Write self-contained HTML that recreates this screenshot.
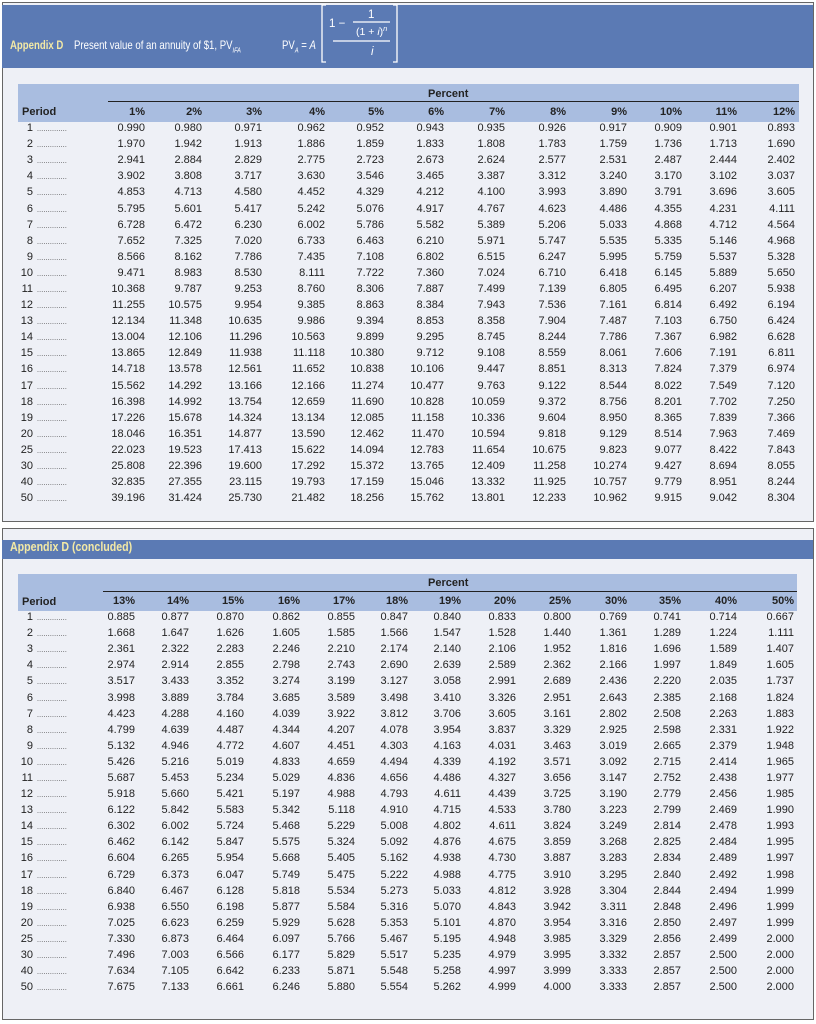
<!DOCTYPE html>
<html><head><meta charset="utf-8"><style>
body{margin:0;width:816px;height:1024px;background:#fff;position:relative;overflow:hidden;font-family:"Liberation Sans",sans-serif;color:#222}
.panel{position:absolute;left:2px;width:810px;background:#eef0f6;border:1px solid #666}
.hb{position:absolute;left:2px;width:811px;background:#5b7ab4}
.band{position:absolute;background:#a9bde0}
.abs{position:absolute}
table{position:absolute;left:0;border-collapse:collapse;table-layout:fixed;font-size:11px}
tr{height:16.1px}
td{height:16.1px;padding:0;text-align:right;white-space:nowrap;line-height:12px;overflow:hidden}
td.p{text-align:left}
td.p b{display:inline-block;width:16px;text-align:right;margin-left:17px;font-weight:normal;line-height:12px}
td.p i{font-style:normal;font-size:7px;letter-spacing:0.2px;margin-left:4px;color:#333;line-height:7px}
th{font-size:11px;font-weight:bold;text-align:right;padding:0;line-height:12px}
.t{color:#fff;font-size:12.5px;transform:scaleX(.85);transform-origin:left center;white-space:nowrap}
.t1{font-size:12px;transform:scaleX(.8)}
.y{color:#f3e9a6;font-weight:bold}
</style></head><body>

<div class="panel" style="top:2px;height:518px"></div>
<div class="hb" style="top:5px;height:63px"></div>
<div class="abs t t1" style="left:10px;top:38px"><span class="y">Appendix D</span>&nbsp;&nbsp;&nbsp; Present value of an annuity of $1, PV<sub style="font-size:7px;font-style:italic">IFA</sub></div>
<div class="abs t t1" style="left:282px;top:38px">PV<sub style="font-size:7px;font-style:italic">A</sub> = <i>A</i></div>
<svg class="abs" style="left:318px;top:4px" width="85" height="62"><g stroke="#fff" fill="none" stroke-width="1.3"><path d="M8 1H4V58H8M75 1H79V58H75"/><path d="M35 18H72M15 37H72"/></g>
<text x="50" y="14" fill="#fff" font-size="11.5" font-family="Liberation Sans">1</text>
<text x="11" y="23" fill="#fff" font-size="11.5" font-family="Liberation Sans">1 −</text>
<text x="38" y="31" fill="#fff" font-size="10.5" font-family="Liberation Sans">(1 + <tspan font-style="italic">i</tspan>)<tspan dy="-4" font-size="7.5" font-style="italic">n</tspan></text>
<text x="53" y="51" fill="#fff" font-size="11.5" font-style="italic" font-family="Liberation Sans">i</text></svg>

<div class="band" style="left:18px;top:84px;width:781px;height:38px"></div>
<div class="abs" style="left:428px;top:88px;font-size:11px;font-weight:bold">Percent</div>
<div class="abs" style="left:108px;top:101px;width:691px;height:1px;background:#222"></div>
<div class="abs" style="left:22px;top:106px;font-size:11px;font-weight:bold">Period</div>

<table style="top:104px;width:795px">
<colgroup><col style="width:100px"><col style="width:45px"><col style="width:57px"><col style="width:60px"><col style="width:63px"><col style="width:59px"><col style="width:60px"><col style="width:61px"><col style="width:61px"><col style="width:61px"><col style="width:55px"><col style="width:55px"><col style="width:58px"></colgroup>
<tr style="height:16px"><th></th><th>1%</th><th>2%</th><th>3%</th><th>4%</th><th>5%</th><th>6%</th><th>7%</th><th>8%</th><th>9%</th><th>10%</th><th>11%</th><th>12%</th></tr>
<tr><td class="p"><b>1</b><i>..............</i></td><td>0.990</td><td>0.980</td><td>0.971</td><td>0.962</td><td>0.952</td><td>0.943</td><td>0.935</td><td>0.926</td><td>0.917</td><td>0.909</td><td>0.901</td><td>0.893</td></tr>
<tr><td class="p"><b>2</b><i>..............</i></td><td>1.970</td><td>1.942</td><td>1.913</td><td>1.886</td><td>1.859</td><td>1.833</td><td>1.808</td><td>1.783</td><td>1.759</td><td>1.736</td><td>1.713</td><td>1.690</td></tr>
<tr><td class="p"><b>3</b><i>..............</i></td><td>2.941</td><td>2.884</td><td>2.829</td><td>2.775</td><td>2.723</td><td>2.673</td><td>2.624</td><td>2.577</td><td>2.531</td><td>2.487</td><td>2.444</td><td>2.402</td></tr>
<tr><td class="p"><b>4</b><i>..............</i></td><td>3.902</td><td>3.808</td><td>3.717</td><td>3.630</td><td>3.546</td><td>3.465</td><td>3.387</td><td>3.312</td><td>3.240</td><td>3.170</td><td>3.102</td><td>3.037</td></tr>
<tr><td class="p"><b>5</b><i>..............</i></td><td>4.853</td><td>4.713</td><td>4.580</td><td>4.452</td><td>4.329</td><td>4.212</td><td>4.100</td><td>3.993</td><td>3.890</td><td>3.791</td><td>3.696</td><td>3.605</td></tr>
<tr><td class="p"><b>6</b><i>..............</i></td><td>5.795</td><td>5.601</td><td>5.417</td><td>5.242</td><td>5.076</td><td>4.917</td><td>4.767</td><td>4.623</td><td>4.486</td><td>4.355</td><td>4.231</td><td>4.111</td></tr>
<tr><td class="p"><b>7</b><i>..............</i></td><td>6.728</td><td>6.472</td><td>6.230</td><td>6.002</td><td>5.786</td><td>5.582</td><td>5.389</td><td>5.206</td><td>5.033</td><td>4.868</td><td>4.712</td><td>4.564</td></tr>
<tr><td class="p"><b>8</b><i>..............</i></td><td>7.652</td><td>7.325</td><td>7.020</td><td>6.733</td><td>6.463</td><td>6.210</td><td>5.971</td><td>5.747</td><td>5.535</td><td>5.335</td><td>5.146</td><td>4.968</td></tr>
<tr><td class="p"><b>9</b><i>..............</i></td><td>8.566</td><td>8.162</td><td>7.786</td><td>7.435</td><td>7.108</td><td>6.802</td><td>6.515</td><td>6.247</td><td>5.995</td><td>5.759</td><td>5.537</td><td>5.328</td></tr>
<tr><td class="p"><b>10</b><i>..............</i></td><td>9.471</td><td>8.983</td><td>8.530</td><td>8.111</td><td>7.722</td><td>7.360</td><td>7.024</td><td>6.710</td><td>6.418</td><td>6.145</td><td>5.889</td><td>5.650</td></tr>
<tr><td class="p"><b>11</b><i>..............</i></td><td>10.368</td><td>9.787</td><td>9.253</td><td>8.760</td><td>8.306</td><td>7.887</td><td>7.499</td><td>7.139</td><td>6.805</td><td>6.495</td><td>6.207</td><td>5.938</td></tr>
<tr><td class="p"><b>12</b><i>..............</i></td><td>11.255</td><td>10.575</td><td>9.954</td><td>9.385</td><td>8.863</td><td>8.384</td><td>7.943</td><td>7.536</td><td>7.161</td><td>6.814</td><td>6.492</td><td>6.194</td></tr>
<tr><td class="p"><b>13</b><i>..............</i></td><td>12.134</td><td>11.348</td><td>10.635</td><td>9.986</td><td>9.394</td><td>8.853</td><td>8.358</td><td>7.904</td><td>7.487</td><td>7.103</td><td>6.750</td><td>6.424</td></tr>
<tr><td class="p"><b>14</b><i>..............</i></td><td>13.004</td><td>12.106</td><td>11.296</td><td>10.563</td><td>9.899</td><td>9.295</td><td>8.745</td><td>8.244</td><td>7.786</td><td>7.367</td><td>6.982</td><td>6.628</td></tr>
<tr><td class="p"><b>15</b><i>..............</i></td><td>13.865</td><td>12.849</td><td>11.938</td><td>11.118</td><td>10.380</td><td>9.712</td><td>9.108</td><td>8.559</td><td>8.061</td><td>7.606</td><td>7.191</td><td>6.811</td></tr>
<tr><td class="p"><b>16</b><i>..............</i></td><td>14.718</td><td>13.578</td><td>12.561</td><td>11.652</td><td>10.838</td><td>10.106</td><td>9.447</td><td>8.851</td><td>8.313</td><td>7.824</td><td>7.379</td><td>6.974</td></tr>
<tr><td class="p"><b>17</b><i>..............</i></td><td>15.562</td><td>14.292</td><td>13.166</td><td>12.166</td><td>11.274</td><td>10.477</td><td>9.763</td><td>9.122</td><td>8.544</td><td>8.022</td><td>7.549</td><td>7.120</td></tr>
<tr><td class="p"><b>18</b><i>..............</i></td><td>16.398</td><td>14.992</td><td>13.754</td><td>12.659</td><td>11.690</td><td>10.828</td><td>10.059</td><td>9.372</td><td>8.756</td><td>8.201</td><td>7.702</td><td>7.250</td></tr>
<tr><td class="p"><b>19</b><i>..............</i></td><td>17.226</td><td>15.678</td><td>14.324</td><td>13.134</td><td>12.085</td><td>11.158</td><td>10.336</td><td>9.604</td><td>8.950</td><td>8.365</td><td>7.839</td><td>7.366</td></tr>
<tr><td class="p"><b>20</b><i>..............</i></td><td>18.046</td><td>16.351</td><td>14.877</td><td>13.590</td><td>12.462</td><td>11.470</td><td>10.594</td><td>9.818</td><td>9.129</td><td>8.514</td><td>7.963</td><td>7.469</td></tr>
<tr><td class="p"><b>25</b><i>..............</i></td><td>22.023</td><td>19.523</td><td>17.413</td><td>15.622</td><td>14.094</td><td>12.783</td><td>11.654</td><td>10.675</td><td>9.823</td><td>9.077</td><td>8.422</td><td>7.843</td></tr>
<tr><td class="p"><b>30</b><i>..............</i></td><td>25.808</td><td>22.396</td><td>19.600</td><td>17.292</td><td>15.372</td><td>13.765</td><td>12.409</td><td>11.258</td><td>10.274</td><td>9.427</td><td>8.694</td><td>8.055</td></tr>
<tr><td class="p"><b>40</b><i>..............</i></td><td>32.835</td><td>27.355</td><td>23.115</td><td>19.793</td><td>17.159</td><td>15.046</td><td>13.332</td><td>11.925</td><td>10.757</td><td>9.779</td><td>8.951</td><td>8.244</td></tr>
<tr><td class="p"><b>50</b><i>..............</i></td><td>39.196</td><td>31.424</td><td>25.730</td><td>21.482</td><td>18.256</td><td>15.762</td><td>13.801</td><td>12.233</td><td>10.962</td><td>9.915</td><td>9.042</td><td>8.304</td></tr>
</table>

<div class="panel" style="top:528px;height:490px"></div>
<div class="hb" style="top:540px;height:19px"></div>
<div class="abs t" style="left:10px;top:540px"><span class="y">Appendix D (concluded)</span></div>

<div class="band" style="left:18px;top:574px;width:779px;height:37px"></div>
<div class="abs" style="left:428px;top:577px;font-size:11px;font-weight:bold">Percent</div>
<div class="abs" style="left:103px;top:591px;width:694px;height:1px;background:#222"></div>
<div class="abs" style="left:22px;top:596px;font-size:11px;font-weight:bold">Period</div>

<table style="top:593px;width:794px">
<colgroup><col style="width:95px"><col style="width:40px"><col style="width:54px"><col style="width:55px"><col style="width:56px"><col style="width:55px"><col style="width:53px"><col style="width:53px"><col style="width:55px"><col style="width:55px"><col style="width:56px"><col style="width:54px"><col style="width:56px"><col style="width:57px"></colgroup>
<tr style="height:16px"><th></th><th>13%</th><th>14%</th><th>15%</th><th>16%</th><th>17%</th><th>18%</th><th>19%</th><th>20%</th><th>25%</th><th>30%</th><th>35%</th><th>40%</th><th>50%</th></tr>
<tr><td class="p"><b>1</b><i>..............</i></td><td>0.885</td><td>0.877</td><td>0.870</td><td>0.862</td><td>0.855</td><td>0.847</td><td>0.840</td><td>0.833</td><td>0.800</td><td>0.769</td><td>0.741</td><td>0.714</td><td>0.667</td></tr>
<tr><td class="p"><b>2</b><i>..............</i></td><td>1.668</td><td>1.647</td><td>1.626</td><td>1.605</td><td>1.585</td><td>1.566</td><td>1.547</td><td>1.528</td><td>1.440</td><td>1.361</td><td>1.289</td><td>1.224</td><td>1.111</td></tr>
<tr><td class="p"><b>3</b><i>..............</i></td><td>2.361</td><td>2.322</td><td>2.283</td><td>2.246</td><td>2.210</td><td>2.174</td><td>2.140</td><td>2.106</td><td>1.952</td><td>1.816</td><td>1.696</td><td>1.589</td><td>1.407</td></tr>
<tr><td class="p"><b>4</b><i>..............</i></td><td>2.974</td><td>2.914</td><td>2.855</td><td>2.798</td><td>2.743</td><td>2.690</td><td>2.639</td><td>2.589</td><td>2.362</td><td>2.166</td><td>1.997</td><td>1.849</td><td>1.605</td></tr>
<tr><td class="p"><b>5</b><i>..............</i></td><td>3.517</td><td>3.433</td><td>3.352</td><td>3.274</td><td>3.199</td><td>3.127</td><td>3.058</td><td>2.991</td><td>2.689</td><td>2.436</td><td>2.220</td><td>2.035</td><td>1.737</td></tr>
<tr><td class="p"><b>6</b><i>..............</i></td><td>3.998</td><td>3.889</td><td>3.784</td><td>3.685</td><td>3.589</td><td>3.498</td><td>3.410</td><td>3.326</td><td>2.951</td><td>2.643</td><td>2.385</td><td>2.168</td><td>1.824</td></tr>
<tr><td class="p"><b>7</b><i>..............</i></td><td>4.423</td><td>4.288</td><td>4.160</td><td>4.039</td><td>3.922</td><td>3.812</td><td>3.706</td><td>3.605</td><td>3.161</td><td>2.802</td><td>2.508</td><td>2.263</td><td>1.883</td></tr>
<tr><td class="p"><b>8</b><i>..............</i></td><td>4.799</td><td>4.639</td><td>4.487</td><td>4.344</td><td>4.207</td><td>4.078</td><td>3.954</td><td>3.837</td><td>3.329</td><td>2.925</td><td>2.598</td><td>2.331</td><td>1.922</td></tr>
<tr><td class="p"><b>9</b><i>..............</i></td><td>5.132</td><td>4.946</td><td>4.772</td><td>4.607</td><td>4.451</td><td>4.303</td><td>4.163</td><td>4.031</td><td>3.463</td><td>3.019</td><td>2.665</td><td>2.379</td><td>1.948</td></tr>
<tr><td class="p"><b>10</b><i>..............</i></td><td>5.426</td><td>5.216</td><td>5.019</td><td>4.833</td><td>4.659</td><td>4.494</td><td>4.339</td><td>4.192</td><td>3.571</td><td>3.092</td><td>2.715</td><td>2.414</td><td>1.965</td></tr>
<tr><td class="p"><b>11</b><i>..............</i></td><td>5.687</td><td>5.453</td><td>5.234</td><td>5.029</td><td>4.836</td><td>4.656</td><td>4.486</td><td>4.327</td><td>3.656</td><td>3.147</td><td>2.752</td><td>2.438</td><td>1.977</td></tr>
<tr><td class="p"><b>12</b><i>..............</i></td><td>5.918</td><td>5.660</td><td>5.421</td><td>5.197</td><td>4.988</td><td>4.793</td><td>4.611</td><td>4.439</td><td>3.725</td><td>3.190</td><td>2.779</td><td>2.456</td><td>1.985</td></tr>
<tr><td class="p"><b>13</b><i>..............</i></td><td>6.122</td><td>5.842</td><td>5.583</td><td>5.342</td><td>5.118</td><td>4.910</td><td>4.715</td><td>4.533</td><td>3.780</td><td>3.223</td><td>2.799</td><td>2.469</td><td>1.990</td></tr>
<tr><td class="p"><b>14</b><i>..............</i></td><td>6.302</td><td>6.002</td><td>5.724</td><td>5.468</td><td>5.229</td><td>5.008</td><td>4.802</td><td>4.611</td><td>3.824</td><td>3.249</td><td>2.814</td><td>2.478</td><td>1.993</td></tr>
<tr><td class="p"><b>15</b><i>..............</i></td><td>6.462</td><td>6.142</td><td>5.847</td><td>5.575</td><td>5.324</td><td>5.092</td><td>4.876</td><td>4.675</td><td>3.859</td><td>3.268</td><td>2.825</td><td>2.484</td><td>1.995</td></tr>
<tr><td class="p"><b>16</b><i>..............</i></td><td>6.604</td><td>6.265</td><td>5.954</td><td>5.668</td><td>5.405</td><td>5.162</td><td>4.938</td><td>4.730</td><td>3.887</td><td>3.283</td><td>2.834</td><td>2.489</td><td>1.997</td></tr>
<tr><td class="p"><b>17</b><i>..............</i></td><td>6.729</td><td>6.373</td><td>6.047</td><td>5.749</td><td>5.475</td><td>5.222</td><td>4.988</td><td>4.775</td><td>3.910</td><td>3.295</td><td>2.840</td><td>2.492</td><td>1.998</td></tr>
<tr><td class="p"><b>18</b><i>..............</i></td><td>6.840</td><td>6.467</td><td>6.128</td><td>5.818</td><td>5.534</td><td>5.273</td><td>5.033</td><td>4.812</td><td>3.928</td><td>3.304</td><td>2.844</td><td>2.494</td><td>1.999</td></tr>
<tr><td class="p"><b>19</b><i>..............</i></td><td>6.938</td><td>6.550</td><td>6.198</td><td>5.877</td><td>5.584</td><td>5.316</td><td>5.070</td><td>4.843</td><td>3.942</td><td>3.311</td><td>2.848</td><td>2.496</td><td>1.999</td></tr>
<tr><td class="p"><b>20</b><i>..............</i></td><td>7.025</td><td>6.623</td><td>6.259</td><td>5.929</td><td>5.628</td><td>5.353</td><td>5.101</td><td>4.870</td><td>3.954</td><td>3.316</td><td>2.850</td><td>2.497</td><td>1.999</td></tr>
<tr><td class="p"><b>25</b><i>..............</i></td><td>7.330</td><td>6.873</td><td>6.464</td><td>6.097</td><td>5.766</td><td>5.467</td><td>5.195</td><td>4.948</td><td>3.985</td><td>3.329</td><td>2.856</td><td>2.499</td><td>2.000</td></tr>
<tr><td class="p"><b>30</b><i>..............</i></td><td>7.496</td><td>7.003</td><td>6.566</td><td>6.177</td><td>5.829</td><td>5.517</td><td>5.235</td><td>4.979</td><td>3.995</td><td>3.332</td><td>2.857</td><td>2.500</td><td>2.000</td></tr>
<tr><td class="p"><b>40</b><i>..............</i></td><td>7.634</td><td>7.105</td><td>6.642</td><td>6.233</td><td>5.871</td><td>5.548</td><td>5.258</td><td>4.997</td><td>3.999</td><td>3.333</td><td>2.857</td><td>2.500</td><td>2.000</td></tr>
<tr><td class="p"><b>50</b><i>..............</i></td><td>7.675</td><td>7.133</td><td>6.661</td><td>6.246</td><td>5.880</td><td>5.554</td><td>5.262</td><td>4.999</td><td>4.000</td><td>3.333</td><td>2.857</td><td>2.500</td><td>2.000</td></tr>
</table>
</body></html>
